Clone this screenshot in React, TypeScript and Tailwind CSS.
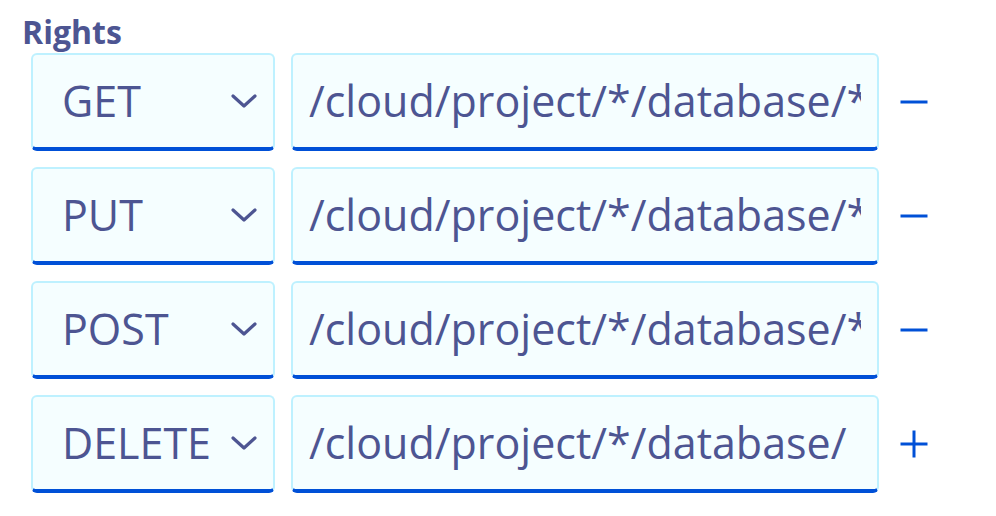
import { useState } from 'react'

type Right = { method: string; path: string; last?: boolean }

const initial: Right[] = [
  { method: 'GET', path: '/cloud/project/*/database/*' },
  { method: 'PUT', path: '/cloud/project/*/database/*' },
  { method: 'POST', path: '/cloud/project/*/database/*' },
  { method: 'DELETE', path: '/cloud/project/*/database/', last: true },
]

function Chevron() {
  return (
    <svg width="26" height="16" viewBox="0 0 26 16" className="shrink-0">
      <path d="M2 3 L13 13 L24 3" fill="none" stroke="#4d5592" strokeWidth="3.2" strokeLinecap="round" strokeLinejoin="round" />
    </svg>
  )
}

function ActionIcon({ plus }: { plus?: boolean }) {
  return (
    <svg width="28" height="28" viewBox="0 0 28 28">
      <path d="M0.5 14 H27.5" stroke="#0050d7" strokeWidth="3" />
      {plus && <path d="M14 0.5 V27.5" stroke="#0050d7" strokeWidth="3" />}
    </svg>
  )
}

export default function App() {
  const [rights] = useState(initial)

  return (
    <div className="w-[996px] h-[516px] bg-white pl-[22px] pt-[13px]" style={{ fontFamily: '"Open Sans", sans-serif' }}>
      <div className="text-[32px] font-bold leading-[38px] text-[#4d5592]">Rights</div>
      <div className="flex flex-col gap-[16px] pl-[9px] pt-[2px]">
        {rights.map((r) => (
          <div key={r.method} className="flex items-center">
            <div className="flex h-[98px] w-[244px] items-center justify-between rounded-[6px] border-2 border-b-[4px] border-[#bef1ff] border-b-[#0050d7] bg-[#f5feff] pl-[29px] pr-[16px]">
              <span className="text-[43px] text-[#4d5592]">{r.method}</span>
              <Chevron />
            </div>
            <div className="ml-[16px] flex h-[98px] w-[588px] items-center rounded-[6px] border-2 border-b-[4px] border-[#bef1ff] border-b-[#0050d7] bg-[#f5feff] pl-[16px] pr-[16px]">
              <input
                readOnly
                value={r.path}
                className="w-full min-w-0 bg-transparent text-[43px] text-[#4d5592] outline-none"
              />
            </div>
            <button className="ml-[21px] flex h-[28px] w-[28px] items-center justify-center">
              <ActionIcon plus={r.last} />
            </button>
          </div>
        ))}
      </div>
    </div>
  )
}
